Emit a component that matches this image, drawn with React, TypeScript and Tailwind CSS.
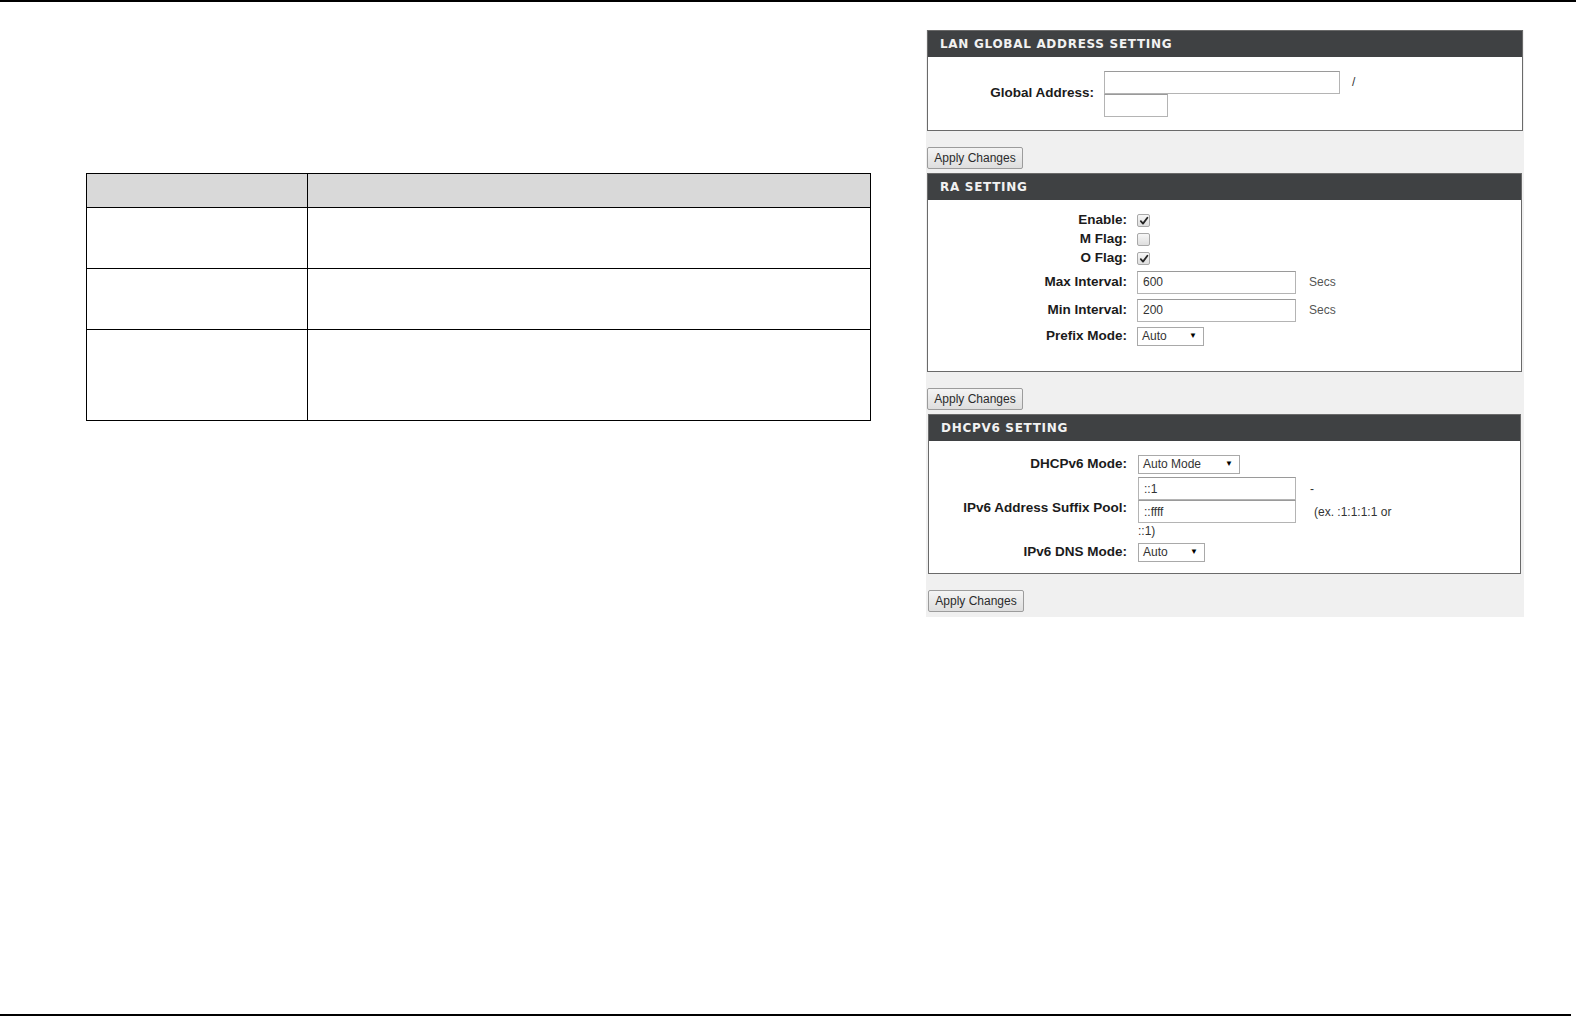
import React from "react";

const labelCls =
  "font-['Liberation_Sans',Arial,sans-serif] font-bold text-[13.5px] text-[#1b1b1b] text-right whitespace-nowrap";
const valueCls = "font-['Liberation_Sans',Arial,sans-serif] text-[12px] text-[#333]";

function Header({ title }: { title: string }) {
  return (
    <div className="h-[26px] bg-[#3f4143] flex items-center pl-[12px]">
      <span className="font-['DejaVu_Sans',Verdana,sans-serif] font-bold text-[12px] tracking-[0.7px] text-[#f2f2f2] leading-none">
        {title}
      </span>
    </div>
  );
}

function TextInput({ value = "", w, h = 23 }: { value?: string; w: number; h?: number }) {
  return (
    <div
      className={`bg-white border border-[#b4b4b4] border-t-[#9a9a9a] flex items-center pl-[5px] ${valueCls}`}
      style={{ width: w, height: h }}
    >
      {value}
    </div>
  );
}

function Select({ text, w }: { text: string; w: number }) {
  return (
    <div
      className={`bg-white border border-[#a9a9a9] h-[19px] flex items-center justify-between pl-[4px] pr-[6px] ${valueCls}`}
      style={{ width: w }}
    >
      <span>{text}</span>
      <span className="text-[8px] text-black leading-none">▼</span>
    </div>
  );
}

function CheckBox({ checked }: { checked: boolean }) {
  return (
    <div className="w-[13px] h-[13px] rounded-[2px] border border-[#a8a8a8] bg-gradient-to-b from-[#f7f7f7] to-[#dedede] flex items-center justify-center">
      {checked && (
        <svg width="10" height="10" viewBox="0 0 10 10">
          <path d="M1.8 5.2 L4 7.6 L8.4 1.8" fill="none" stroke="#262626" strokeWidth="1.8" strokeLinecap="round" strokeLinejoin="round" />
        </svg>
      )}
    </div>
  );
}

function ApplyBtn() {
  return (
    <div className="w-[96px] h-[22px] rounded-[2px] border border-[#9c9c9c] bg-gradient-to-b from-[#f4f4f4] to-[#dedede] flex items-center justify-center font-['Liberation_Sans',Arial,sans-serif] text-[12px] text-[#2b2b2b]">
      Apply Changes
    </div>
  );
}

function Row({
  label,
  h,
  labelW,
  gap,
  children,
}: {
  label: string;
  h: number;
  labelW: number;
  gap: number;
  children: React.ReactNode;
}) {
  return (
    <div className="flex items-center" style={{ height: h }}>
      <div className={labelCls} style={{ width: labelW }}>
        {label}
      </div>
      <div className="flex items-center" style={{ marginLeft: gap }}>
        {children}
      </div>
    </div>
  );
}

export default function App() {
  return (
    <div className="w-[1576px] h-[1017px] bg-white flex flex-col overflow-hidden">
      <div className="h-[2px] bg-black w-full" />
      <div className="flex-1 flex">
        {/* left table */}
        <div className="pl-[86px] pt-[171px]">
          <table className="border-collapse table-fixed w-[785px]">
            <colgroup>
              <col className="w-[221px]" />
              <col />
            </colgroup>
            <tbody>
              <tr className="h-[34px] bg-[#d9d9d9]">
                <td className="border border-black" />
                <td className="border border-black" />
              </tr>
              <tr className="h-[61px]">
                <td className="border border-black" />
                <td className="border border-black" />
              </tr>
              <tr className="h-[61px]">
                <td className="border border-black" />
                <td className="border border-black" />
              </tr>
              <tr className="h-[91px]">
                <td className="border border-black" />
                <td className="border border-black" />
              </tr>
            </tbody>
          </table>
        </div>

        {/* right panel */}
        <div className="ml-[55px] mt-[28px] w-[598px] h-[587px] bg-[#f0f0f0] px-[1px] flex flex-col">
          {/* LAN GLOBAL */}
          <div className="border border-[#6a6a6a]">
            <Header title="LAN GLOBAL ADDRESS SETTING" />
            <div className="bg-white h-[73px] flex items-center">
              <div className={labelCls} style={{ width: 166 }}>
                Global Address:
              </div>
              <div className="ml-[10px] flex flex-col">
                <div className="flex items-center">
                  <TextInput w={236} />
                  <span className={`ml-[12px] ${valueCls}`}>/</span>
                </div>
                <TextInput w={64} />
              </div>
            </div>
          </div>
          <div className="mt-[16px]">
            <ApplyBtn />
          </div>

          {/* RA SETTING */}
          <div className="mt-[4px] border border-[#6a6a6a] mr-[1px]">
            <Header title="RA SETTING" />
            <div className="bg-white pt-[11px] pb-[23px]">
              <Row label="Enable:" h={19} labelW={199} gap={10}>
                <CheckBox checked />
              </Row>
              <Row label="M Flag:" h={19} labelW={199} gap={10}>
                <CheckBox checked={false} />
              </Row>
              <Row label="O Flag:" h={19} labelW={199} gap={10}>
                <CheckBox checked />
              </Row>
              <Row label="Max Interval:" h={28} labelW={199} gap={10}>
                <TextInput value="600" w={159} />
                <span className={`ml-[13px] ${valueCls} text-[#555]`}>Secs</span>
              </Row>
              <Row label="Min Interval:" h={28} labelW={199} gap={10}>
                <TextInput value="200" w={159} />
                <span className={`ml-[13px] ${valueCls} text-[#555]`}>Secs</span>
              </Row>
              <Row label="Prefix Mode:" h={24} labelW={199} gap={10}>
                <Select text="Auto" w={67} />
              </Row>
            </div>
          </div>
          <div className="mt-[16px]">
            <ApplyBtn />
          </div>

          {/* DHCPV6 */}
          <div className="mt-[4px] border border-[#6a6a6a] ml-[1px] mr-[2px]">
            <Header title="DHCPV6 SETTING" />
            <div className="bg-white pt-[10px] pb-[8px]">
              <Row label="DHCPv6 Mode:" h={26} labelW={198} gap={11}>
                <Select text="Auto Mode" w={102} />
              </Row>
              <div className="flex items-center h-[62px]">
                <div className={labelCls} style={{ width: 198 }}>
                  IPv6 Address Suffix Pool:
                </div>
                <div className="ml-[11px] flex flex-col">
                  <div className="flex items-center">
                    <TextInput value="::1" w={158} />
                    <span className={`ml-[14px] ${valueCls}`}>-</span>
                  </div>
                  <div className="flex items-center">
                    <TextInput value="::ffff" w={158} />
                    <span className={`ml-[18px] ${valueCls}`}>(ex. :1:1:1:1 or</span>
                  </div>
                  <div className={`h-[16px] flex items-center ${valueCls}`}>::1)</div>
                </div>
              </div>
              <Row label="IPv6 DNS Mode:" h={26} labelW={198} gap={11}>
                <Select text="Auto" w={67} />
              </Row>
            </div>
          </div>
          <div className="mt-[16px] ml-[1px]">
            <ApplyBtn />
          </div>
        </div>
      </div>
      <div className="h-[2px] bg-black w-[1571px] mb-[1px]" />
    </div>
  );
}
